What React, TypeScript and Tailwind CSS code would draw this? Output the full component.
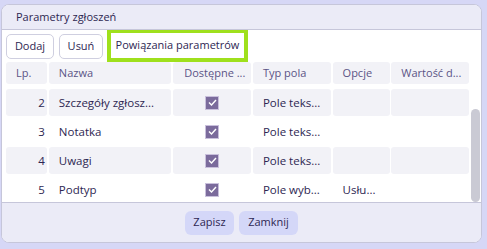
import React from "react";

const rows = [
  { n: 2, name: "Szczegóły zgłosz...", typ: "Pole teks...", opcje: "", shade: true },
  { n: 3, name: "Notatka", typ: "Pole teks...", opcje: "", shade: false },
  { n: 4, name: "Uwagi", typ: "Pole teks...", opcje: "", shade: true },
  { n: 5, name: "Podtyp", typ: "Pole wyb...", opcje: "Usłu...", shade: false },
];

function Check() {
  return (
    <div className="w-[14px] h-[14px] bg-[#7b6b9c] border border-[#c9c0dc] flex items-center justify-center">
      <svg width="9" height="7" viewBox="0 0 9 7">
        <path d="M1 3.5 L3.5 6 L8 1" stroke="white" strokeWidth="1.4" fill="none" />
      </svg>
    </div>
  );
}

export default function App() {
  const cell = "h-full flex items-center rounded-[3px]";
  return (
    <div
      className="w-[487px] h-[249px] bg-[#d6d7f6] pt-[4px] pl-[1px] pr-[5px] pb-[6px] overflow-hidden"
      style={{ fontFamily: '"Open Sans", sans-serif' }}
    >
      <div className="h-full flex flex-col rounded-[8px] border border-[#c6c6da] bg-white overflow-hidden">
        <div className="h-[25px] shrink-0 bg-[#ebebf7] border-b border-[#c6c6da] flex items-center pl-[14px] text-[11px] text-[#2e2752]">
          Parametry zgłoszeń
        </div>
        <div className="h-[32px] shrink-0 flex items-center pl-[4px] gap-[5px] text-[11px] text-[#2e2752]">
          <div className="h-[25px] w-[48px] border border-[#cfcfe0] rounded-[5px] flex items-center justify-center">Dodaj</div>
          <div className="h-[25px] w-[44px] border border-[#cfcfe0] rounded-[5px] flex items-center justify-center">Usuń</div>
          <div className="h-[32px] w-[141px] border-[4px] border-t-[3px] border-[#9fe01c] flex items-center justify-center -ml-[1px]">
            Powiązania parametrów
          </div>
        </div>
        <div className="flex-1 flex min-h-0">
          <div className="flex-1 flex flex-col pl-[4px] overflow-hidden">
            <div className="h-[22px] shrink-0 flex gap-[2px] text-[11px] text-[#5b5486]">
              <div className={`${cell} w-[41px] bg-[#f2f2f7] pl-[10px]`}>Lp.</div>
              <div className={`${cell} w-[123px] bg-[#f2f2f7] pl-[10px]`}>Nazwa</div>
              <div className={`${cell} w-[78px] bg-[#f2f2f7] pl-[11px]`}>Dostępne ...</div>
              <div className={`${cell} w-[78px] bg-[#f2f2f7] pl-[10px]`}>Typ pola</div>
              <div className={`${cell} w-[58px] bg-[#f2f2f7] pl-[10px]`}>Opcje</div>
              <div className={`${cell} w-[78px] bg-[#f2f2f7] pl-[10px] -ml-[1px]`}>Wartość d...</div>
            </div>
            <div className="flex flex-col gap-[2px] mt-[5px] text-[11.5px] text-[#2e2752]">
              {rows.map((r) => {
                const bg = r.shade ? "bg-[#f2f2f7]" : "";
                return (
                  <div key={r.n} className="h-[27px] flex gap-[2px]">
                    <div className={`${cell} w-[41px] ${bg} justify-end pr-[2px]`}>{r.n}</div>
                    <div className={`${cell} w-[123px] ${bg} pl-[10px]`}>{r.name}</div>
                    <div className={`${cell} w-[78px] ${bg} justify-center`}><Check /></div>
                    <div className={`${cell} w-[78px] ${bg} pl-[10px]`}>{r.typ}</div>
                    <div className={`${cell} w-[58px] ${bg} pl-[10px]`}>{r.opcje}</div>
                    <div className={`${cell} w-[78px] ${bg} -ml-[1px]`}></div>
                  </div>
                );
              })}
            </div>
          </div>
          <div className="w-[12px] shrink-0 flex flex-col pt-[47px] pr-[1px] pl-[2px]">
            <div className="flex-1 bg-[#cacad4] rounded-full" />
          </div>
        </div>
        <div className="h-[40px] shrink-0 bg-[#ebebf7] border-t border-[#c6c6da] flex items-center justify-center gap-[5px] text-[11px] text-[#2e2752]">
          <div className="h-[24px] w-[49px] bg-[#d4d7f8] rounded-[6px] flex items-center justify-center">Zapisz</div>
          <div className="h-[24px] w-[59px] bg-[#d4d7f8] rounded-[6px] flex items-center justify-center">Zamknij</div>
        </div>
      </div>
    </div>
  );
}
